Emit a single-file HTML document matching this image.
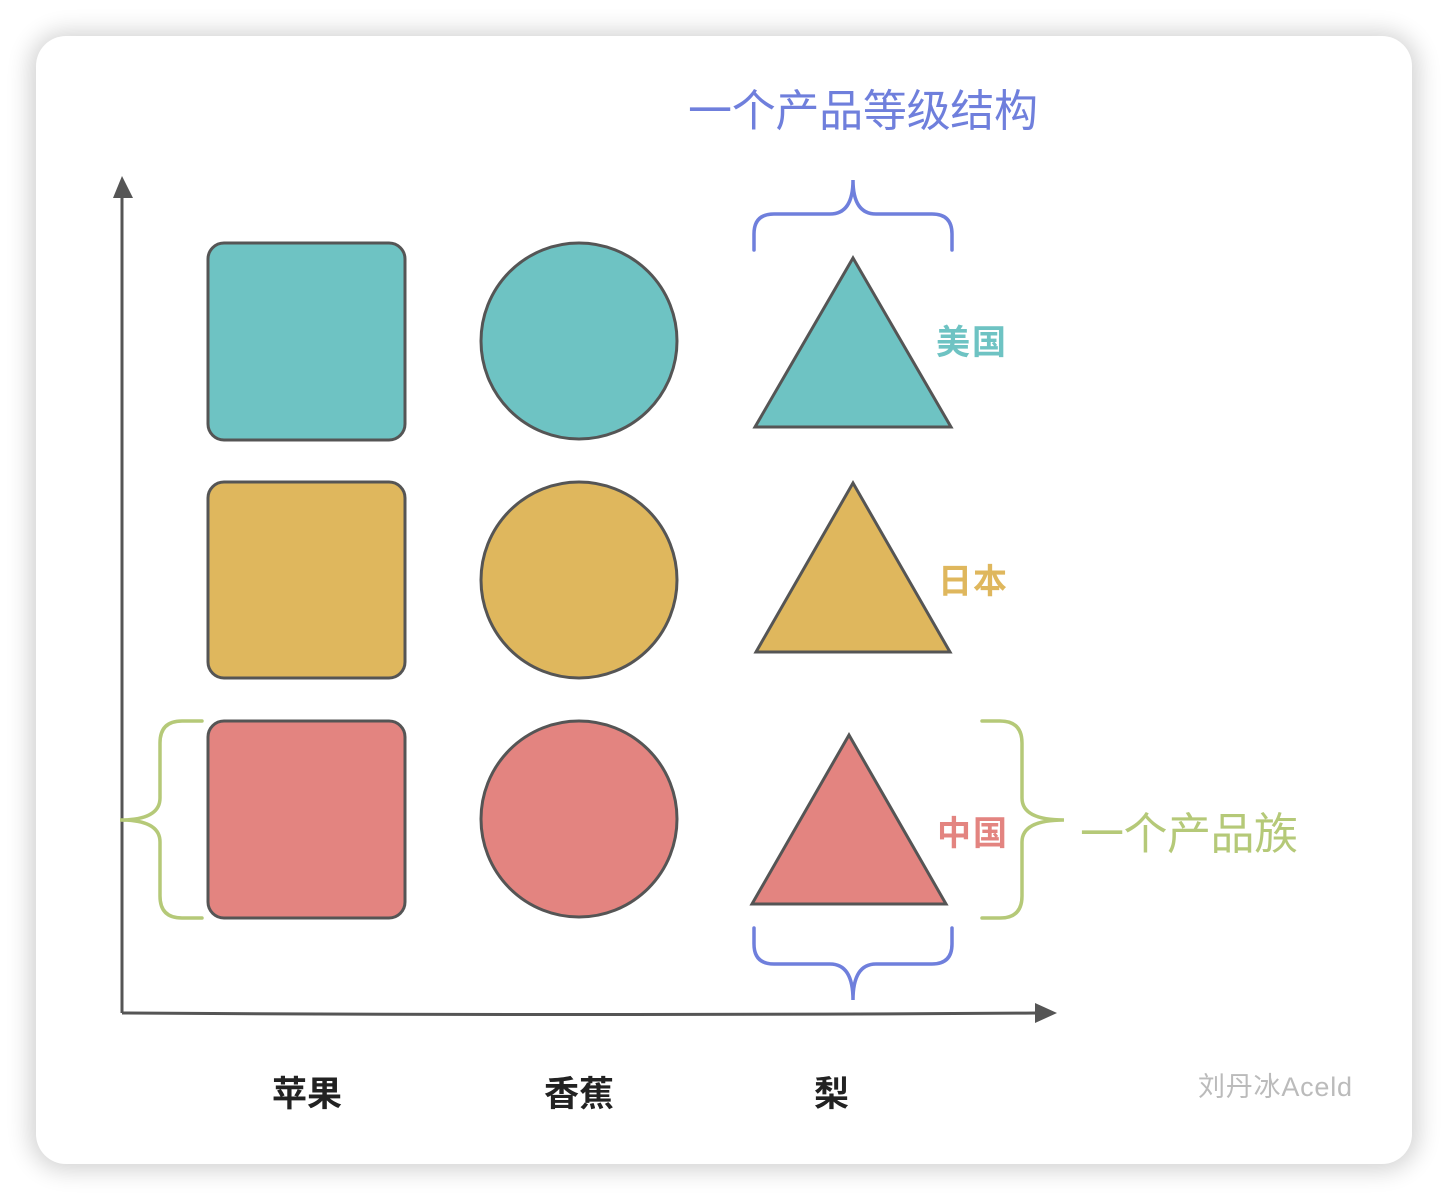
<!DOCTYPE html>
<html><head><meta charset="utf-8"><style>
html,body{margin:0;padding:0;background:#fff;width:1448px;height:1200px;overflow:hidden}
svg text{font-family:"Liberation Sans","Noto Sans CJK SC",sans-serif}
</style></head><body>
<svg width="1448" height="1200" viewBox="0 0 1448 1200" xmlns="http://www.w3.org/2000/svg">
<defs>
<filter id="sh" x="-10%" y="-10%" width="120%" height="120%"><feGaussianBlur stdDeviation="12"/></filter>
</defs>
<rect x="30" y="32" width="1388" height="1138" rx="36" fill="#000" opacity="0.18" filter="url(#sh)"/>
<rect x="36" y="36" width="1376" height="1128" rx="30" fill="#fff"/>
<g stroke="#555" stroke-width="3" fill="none">
<path d="M122 1013 V196"/><path d="M122 1013 Q590 1016 1036 1013"/>
</g>
<polygon points="122,176 113,198 133,198" fill="#555"/>
<polygon points="1057,1013 1035,1003 1035,1023" fill="#555"/>
<g stroke="#555" stroke-width="3">
<rect x="208" y="243" width="197" height="197" rx="16" fill="#6ec3c3"/>
<rect x="208" y="482" width="197" height="196" rx="16" fill="#dfb75d"/>
<rect x="208" y="721" width="197" height="197" rx="16" fill="#e38480"/>
<circle cx="579" cy="341" r="98" fill="#6ec3c3"/>
<circle cx="579" cy="580" r="98" fill="#dfb75d"/>
<circle cx="579" cy="819" r="98" fill="#e38480"/>
<polygon points="853,258 755,427 951,427" fill="#6ec3c3"/>
<polygon points="853,483 756,652 950,652" fill="#dfb75d"/>
<polygon points="849,735 752,904 946,904" fill="#e38480"/>
</g>
<g fill="none" stroke-width="3.5" stroke-linecap="round">
<path stroke="#6f7fdc" d="M754 250 V234 Q754 214 774 214 H830 Q853 214 853 180 Q853 214 876 214 H932 Q952 214 952 234 V250"/>
<path stroke="#6f7fdc" d="M754 928 V944 Q754 964 774 964 H830 Q853 964 853 1000 Q853 964 876 964 H932 Q952 964 952 944 V928"/>
<path stroke="#b5c978" d="M202 721 H182 Q160 721 160 743 V798 Q160 820 120 820 Q160 820 160 842 V896 Q160 918 182 918 H202"/>
<path stroke="#b5c978" d="M982 721 H1000 Q1022 721 1022 743 V798 Q1022 820 1064 820 Q1022 820 1022 842 V896 Q1022 918 1000 918 H982"/>
</g>
<text x="688" y="126" font-size="44" fill="#6f7fdc" textLength="350">一个产品等级结构</text>
<text x="936" y="354" font-size="34" fill="#6ec3c3" font-weight="bold" textLength="70">美国</text>
<text x="938" y="593" font-size="34" fill="#dfb75d" font-weight="bold" textLength="69">日本</text>
<text x="937" y="845" font-size="34" fill="#e38480" font-weight="bold" textLength="70">中国</text>
<text x="1080" y="849" font-size="44" fill="#b5c978" textLength="218">一个产品族</text>
<g font-size="35" font-weight="bold" fill="#222">
<text x="272" y="1106" textLength="70">苹果</text>
<text x="544" y="1106" textLength="70">香蕉</text>
<text x="814" y="1106">梨</text>
</g>
<text x="1198" y="1096" font-size="27" fill="#bbb" textLength="154">刘丹冰Aceld</text>
</svg>
</body></html>
